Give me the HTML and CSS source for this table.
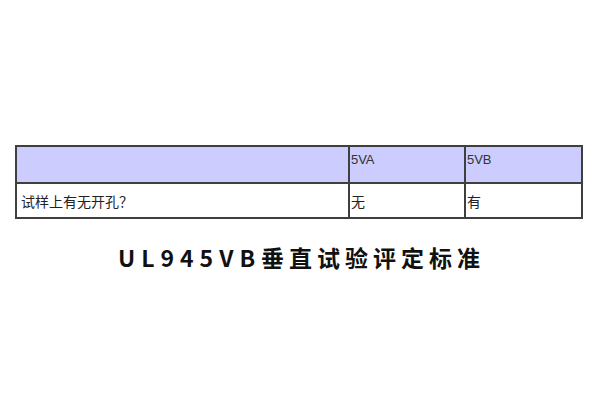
FILE: index.html
```html
<!DOCTYPE html>
<html lang="zh">
<head>
<meta charset="utf-8">
<link rel="stylesheet" href="styles.css">
</head>
<body>
<div class="page">
  <table class="spec">
    <tr class="head">
      <td class="c1"></td>
      <td class="c2">5VA</td>
      <td class="c3">5VB</td>
    </tr>
    <tr class="row">
      <td class="c1 q">试样上有无开孔？</td>
      <td class="c2">无</td>
      <td class="c3">有</td>
    </tr>
  </table>
  <h1 class="title"><span class="latin">UL945VB</span><span class="cjk">垂直试验评定标准</span></h1>
</div>
</body>
</html>
```
FILE: styles.css
```css
html, body {
  margin: 0;
  padding: 0;
  background: #ffffff;
}
.page {
  width: 600px;
  height: 400px;
  box-sizing: border-box;
  padding: 145px 17px 0 15px;
  font-family: "Liberation Sans", "Noto Sans CJK SC", sans-serif;
  color: #222;
}
.spec {
  width: 568px;
  border-collapse: collapse;
  table-layout: fixed;
}
.spec td {
  border: 2px solid #3f3f3f;
  padding: 0 0 0 1px;
  font-size: 13px;
}
.c1 { width: 330px; }
.c2 { width: 115px; }
.c3 { width: 116px; }
.head td {
  background: #ccccff;
  height: 37px;
  vertical-align: top;
  padding-top: 5px;
  box-sizing: border-box;
  color: #333;
}
.row td {
  height: 33px;
  vertical-align: middle;
  font-size: 14px;
  color: #222;
}
.row td.q {
  padding-left: 4px;
}
.title {
  margin: 24px 0 0 0;
  text-align: center;
  font-family: "Noto Sans CJK SC", "Liberation Sans", sans-serif;
  font-size: 23px;
  line-height: 28px;
  font-weight: bold;
  color: #111;
  padding-left: 5px;
}
.latin {
  letter-spacing: 6px;
}
.cjk {
  letter-spacing: 5px;
}
```
